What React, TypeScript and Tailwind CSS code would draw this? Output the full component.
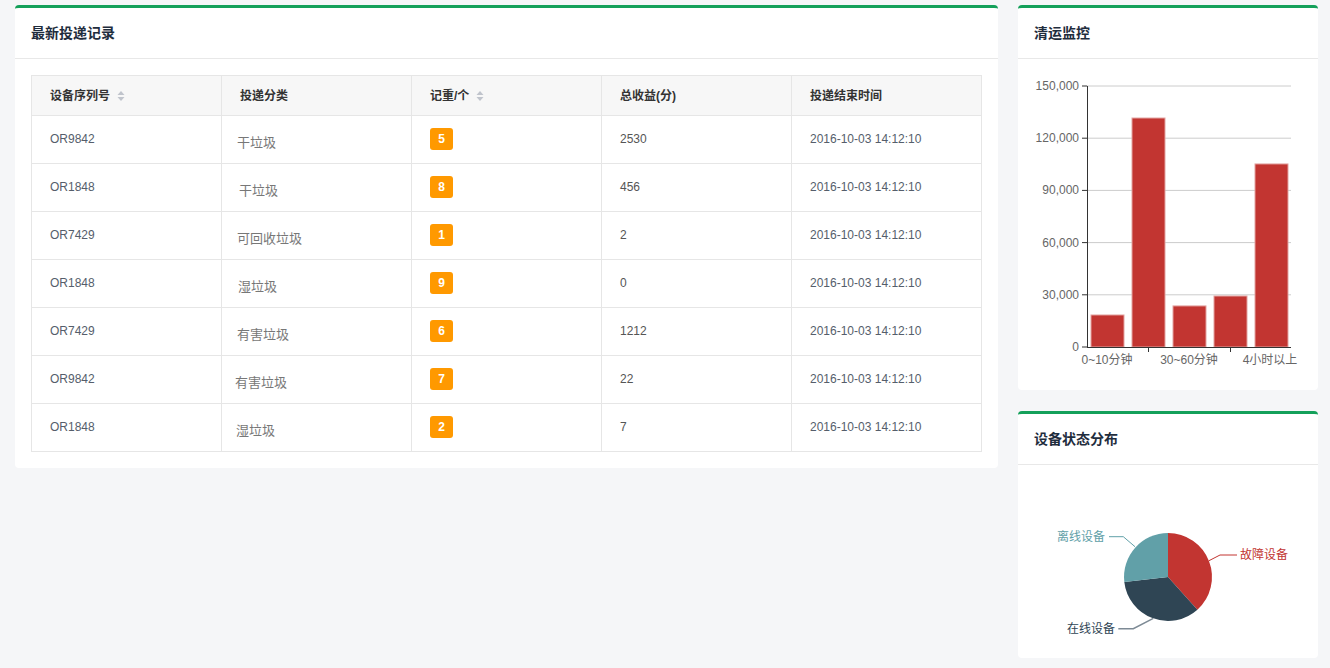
import React from 'react';

type Row = {
  sn: string;
  kind: string;
  count: number;
  income: string;
  time: string;
  dx: string;
};

const rows: Row[] = [
  { sn: 'OR9842', kind: '干垃圾', count: 5, income: '2530', time: '2016-10-03 14:12:10', dx: 'pl-[15px]' },
  { sn: 'OR1848', kind: '干垃圾', count: 8, income: '456', time: '2016-10-03 14:12:10', dx: 'pl-[17px]' },
  { sn: 'OR7429', kind: '可回收垃圾', count: 1, income: '2', time: '2016-10-03 14:12:10', dx: 'pl-[15px]' },
  { sn: 'OR1848', kind: '湿垃圾', count: 9, income: '0', time: '2016-10-03 14:12:10', dx: 'pl-[16px]' },
  { sn: 'OR7429', kind: '有害垃圾', count: 6, income: '1212', time: '2016-10-03 14:12:10', dx: 'pl-[15px]' },
  { sn: 'OR9842', kind: '有害垃圾', count: 7, income: '22', time: '2016-10-03 14:12:10', dx: 'pl-[13px]' },
  { sn: 'OR1848', kind: '湿垃圾', count: 2, income: '7', time: '2016-10-03 14:12:10', dx: 'pl-[14px]' },
];

const SortIcon = () => (
  <svg width="8" height="12" viewBox="0 0 8 12" className="ml-[7px]">
    <path d="M4 1 L7.5 5 L0.5 5 Z" fill="#c0c4cc" />
    <path d="M4 11 L7.5 7 L0.5 7 Z" fill="#c0c4cc" />
  </svg>
);

const Card = ({ title, children }: { title: string; children: React.ReactNode }) => (
  <div className="bg-white rounded-[4px] border-t-[3px] border-[#14a05a] overflow-hidden">
    <div className="h-[51px] flex items-center px-4 border-b border-[#e8e8e8]">
      <h3 className="text-[14px] font-bold text-[#1f2d3d]">{title}</h3>
    </div>
    {children}
  </div>
);

const bars = [18400, 131600, 23600, 29300, 105200];
const ticks = [150000, 120000, 90000, 60000, 30000, 0];

// 柱状图：清运时长分布
const BarChart = () => {
  const top = 26;
  const base = 287;
  const h = base - top;
  return (
    <svg width="300" height="331" className="block">
      <g transform="translate(0,1)">
        {ticks.map((t) => {
          const y = base - (t / 150000) * h;
          return (
            <g key={t}>
              {t !== 0 && <line x1="69" x2="273" y1={y} y2={y} stroke="#ccc" strokeWidth="1" />}
              <line x1="64" x2="69" y1={y} y2={y} stroke="#333" strokeWidth="1" />
              <text x="61" y={y + 4} textAnchor="end" fontSize="12" fill="#666">
                {t.toLocaleString('en-US')}
              </text>
            </g>
          );
        })}
        {bars.map((v, i) => {
          const bh = (v / 150000) * h;
          return (
            <rect
              key={i}
              x={73 + i * 41}
              y={base - bh}
              width="33"
              height={bh}
              fill="#c23531"
              stroke="#e3a3a1"
              strokeWidth="1"
            />
          );
        })}
        <line x1="69.5" x2="69.5" y1={top} y2={base} stroke="#333" strokeWidth="1" />
        <line x1="69" x2="273" y1={base + 0.5} y2={base + 0.5} stroke="#333" strokeWidth="1" />
        <line x1="130.5" x2="130.5" y1={base} y2={base + 5} stroke="#333" strokeWidth="1" />
        <line x1="212.5" x2="212.5" y1={base} y2={base + 5} stroke="#333" strokeWidth="1" />
        <text x="89" y="304" textAnchor="middle" fontSize="12" fill="#666">0~10分钟</text>
        <text x="171" y="304" textAnchor="middle" fontSize="12" fill="#666">30~60分钟</text>
        <text x="252" y="304" textAnchor="middle" fontSize="12" fill="#666">4小时以上</text>
      </g>
    </svg>
  );
};

const PieChart = () => (
  <svg width="300" height="193" className="block">
    <path d="M150 112 L150 68 A44 44 0 0 1 179.4 144.7 Z" fill="#c23531" />
    <path d="M150 112 L179.4 144.7 A44 44 0 0 1 106.3 117 Z" fill="#2f4554" />
    <path d="M150 112 L106.3 117 A44 44 0 0 1 150 68 Z" fill="#61a0a8" />
    <polyline points="191,95.7 202,90 219,90" fill="none" stroke="#c23531" strokeWidth="1" />
    <text x="222" y="94" fontSize="12" fill="#c23531">故障设备</text>
    <polyline points="117,81.7 105.3,71.7 91,71.7" fill="none" stroke="#61a0a8" strokeWidth="1" />
    <text x="87" y="76" textAnchor="end" fontSize="12" fill="#61a0a8">离线设备</text>
    <polyline points="135.3,153.3 115.3,163.7 100.3,163.7" fill="none" stroke="#7d8a95" strokeWidth="1.5" />
    <text x="97" y="168" textAnchor="end" fontSize="12" fill="#2f4554">在线设备</text>
  </svg>
);

export default function App() {
  return (
    <div className="min-h-[668px] bg-[#f5f6f8] flex items-start gap-5 pl-[15px] pr-[12px] pt-[5px] font-['Liberation_Sans','Noto_Sans_CJK_SC',sans-serif]">
      <div className="flex-1">
        <Card title="最新投递记录">
          <div className="p-4">
            <table className="w-full border-collapse border border-[#dcdcdc] text-[12px] table-fixed">
              <thead>
                <tr className="bg-[#f7f7f7] h-[40px]">
                  <th className="text-left font-bold text-[#333] px-[18px] border border-[#e6e6e6]">
                    <span className="inline-flex items-center">设备序列号<SortIcon /></span>
                  </th>
                  <th className="text-left font-bold text-[#333] px-[18px] border border-[#e6e6e6]">投递分类</th>
                  <th className="text-left font-bold text-[#333] px-[18px] border border-[#e6e6e6]">
                    <span className="inline-flex items-center">记重/个<SortIcon /></span>
                  </th>
                  <th className="text-left font-bold text-[#333] px-[18px] border border-[#e6e6e6]">总收益(分)</th>
                  <th className="text-left font-bold text-[#333] px-[18px] border border-[#e6e6e6]">投递结束时间</th>
                </tr>
              </thead>
              <tbody>
                {rows.map((r, i) => (
                  <tr key={i} className="h-[48px]">
                    <td className="px-[18px] text-[#555e6b] border border-[#e6e6e6]">
                      <span className="relative -top-px">{r.sn}</span>
                    </td>
                    <td className={`${r.dx} text-[#777] text-[13px] border border-[#e6e6e6]`}>
                      <span className="relative top-[3px]">{r.kind}</span>
                    </td>
                    <td className="px-[18px] border border-[#e6e6e6]">
                      <span className="relative -top-px inline-flex items-center justify-center w-[23px] h-[22px] rounded-[3px] bg-[#ff9900] text-white font-bold text-[12px]">
                        {r.count}
                      </span>
                    </td>
                    <td className="px-[18px] text-[#555] border border-[#e6e6e6]">
                      <span className="relative -top-px">{r.income}</span>
                    </td>
                    <td className="px-[18px] text-[#555e6b] border border-[#e6e6e6]">
                      <span className="relative -top-px">{r.time}</span>
                    </td>
                  </tr>
                ))}
              </tbody>
            </table>
          </div>
        </Card>
      </div>
      <div className="w-[300px] flex flex-col gap-[21px]">
        <Card title="清运监控">
          <BarChart />
        </Card>
        <Card title="设备状态分布">
          <PieChart />
        </Card>
      </div>
    </div>
  );
}
